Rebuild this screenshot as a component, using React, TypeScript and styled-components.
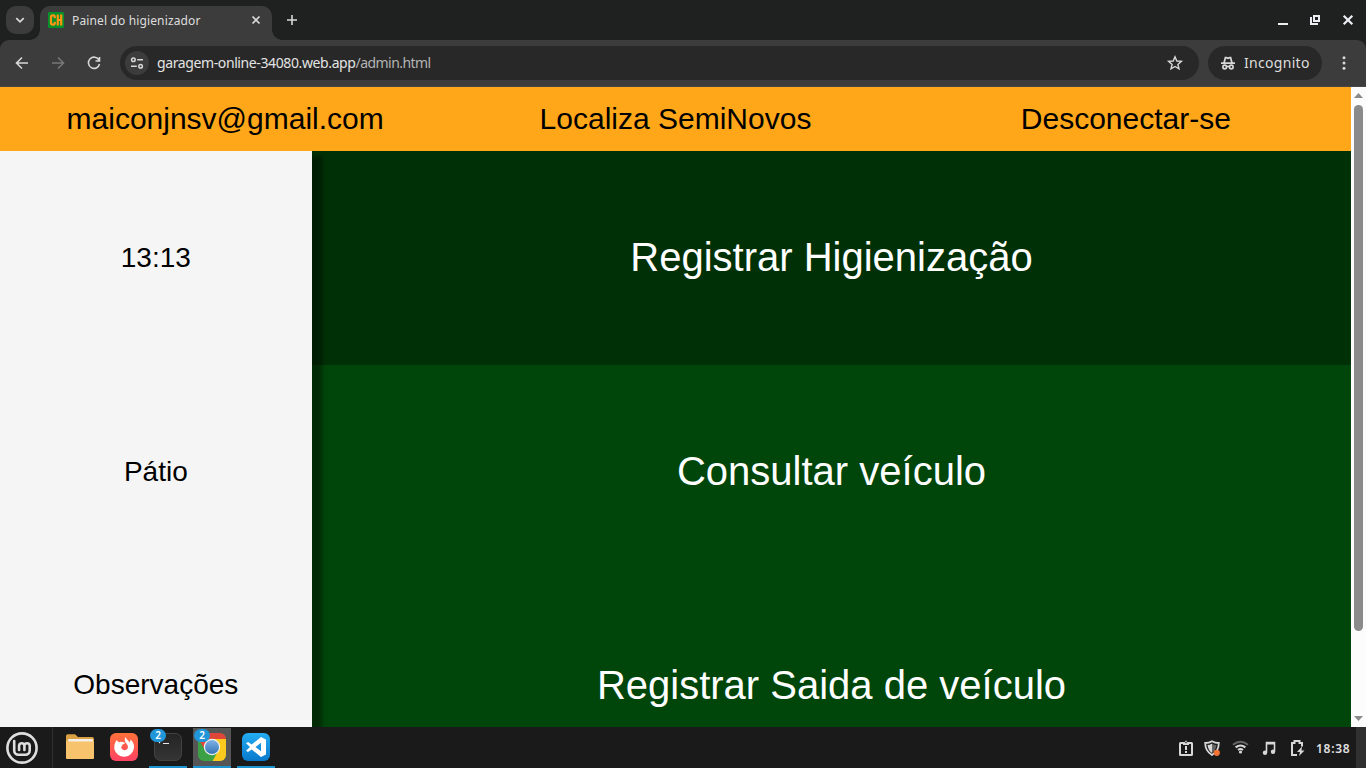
import React from 'react';
import styled, { createGlobalStyle } from 'styled-components';

const GlobalStyle = createGlobalStyle`
  * { box-sizing: border-box; }
  body { margin: 0; overflow: hidden; background: #1a1a1a; }
`;
const uiFont = `'Noto Sans', 'Open Sans', sans-serif`;

const Screen = styled.div`
  width: 1366px; height: 768px; display: flex; flex-direction: column; overflow: hidden;
  font-family: 'Liberation Sans', Arial, sans-serif;
`;
const TabStrip = styled.div`
  height: 40px; background: #1f2120; display: flex; align-items: center; padding: 0 10px 0 6px; flex: none;
`;
const TabSearch = styled.div`
  width: 28px; height: 28px; border-radius: 10px; background: #3c3c3c; display: grid; place-items: center; margin-right: 6px;
`;
const Tab = styled.div`
  position: relative; align-self: flex-end; width: 232px; height: 34px; background: #3c3c3c; border-radius: 10px 10px 0 0;
  display: flex; align-items: center; padding: 0 9px 6px 8px;
  &::before, &::after { content: ''; position: absolute; bottom: 0; width: 10px; height: 10px; }
  &::before { left: -10px; background: radial-gradient(circle at 0 0, transparent 9.5px, #3c3c3c 10px); }
  &::after { right: -10px; background: radial-gradient(circle at 100% 0, transparent 9.5px, #3c3c3c 10px); }
`;
const TabTitle = styled.div`
  flex: 1; margin-left: 8px; color: #dedede; font: 12px/16px ${uiFont}; white-space: nowrap; letter-spacing: 0.14px; padding-top: 1px;
`;
const NewTab = styled.div`display: grid; place-items: center; width: 20px; height: 20px; margin-left: 10px;`;
const WindowButtons = styled.div`margin-left: auto; display: flex; gap: 16px;`;
const Toolbar = styled.div`
  height: 47px; flex: none; display: flex; align-items: center; padding: 0 12px 1px 12px;
  background: #3c3c3c; border-radius: 9px 9px 0 0; border-bottom: 1px solid #474747;
`;
const ToolbarWrap = styled.div`background: #1f2120; flex: none;`;
const NavButtons = styled.div`display: flex; gap: 16px; margin-right: 16px;`;
const AddressBar = styled.div`
  width: 1079px; height: 34px; border-radius: 17px; background: #282828; display: flex; align-items: center; padding: 0 14px 0 5px;
`;
const SiteInfo = styled.div`width: 24px; height: 24px; border-radius: 50%; background: #3c3c3c; display: grid; place-items: center;`;
const Url = styled.div`
  flex: 1; margin-left: 8px; color: #e3e3e3; font: 14px/20px ${uiFont}; letter-spacing: -0.39px; white-space: nowrap;
  span { color: #b4b4b4; letter-spacing: -0.55px; }
`;
const Incognito = styled.div`
  width: 114px; height: 34px; margin-left: 9px; border-radius: 17px; background: #282828; color: #dedede;
  display: flex; align-items: center; gap: 8px; padding-left: 12px; font: 14px/20px ${uiFont}; letter-spacing: 0.3px; white-space: nowrap;
`;
const MenuButton = styled.div`margin-left: 14px; display: flex;`;

const Viewport = styled.div`height: 640px; flex: none; display: flex; overflow: hidden;`;
const Page = styled.div`width: 1351px; height: 640px; overflow: hidden;`;
const Header = styled.header`
  height: 64px; background: #ffa719; display: grid; grid-template-columns: repeat(3, 1fr); place-items: center;
  font-size: 30px; line-height: 34px; color: #000;
`;
const Content = styled.div`display: flex; height: 641px; position: relative; overflow: hidden;`;
const Sidebar = styled.aside`
  width: 312px; background: #f5f5f5; display: grid; grid-template-rows: 213px 215px 212px;
  position: relative; z-index: 1; box-shadow: 10px 5px 4px rgba(0, 0, 0, 0.38);
`;
const SideItem = styled.div`display: grid; place-items: center; font-size: 28px; color: #000; padding-right: 0.4px;`;
const Actions = styled.main`flex: 1; display: grid; grid-template-rows: repeat(3, 1fr);`;
const Action = styled.div<{ $active?: boolean }>`
  display: grid; place-items: center; font-size: 40px; color: #fff;
  background: ${p => (p.$active ? '#003006' : '#00450a')};
`;
const Scrollbar = styled.div`
  width: 15px; background: #fcfcfc; display: flex; flex-direction: column; align-items: center; padding: 6px 0;
`;
const Thumb = styled.div`width: 9px; height: 526px; border-radius: 5px; background: #8b8b8b; margin: 7px 0 auto;`;

const Taskbar = styled.footer`height: 41px; flex: none; background: #1a1a1a; display: flex; align-items: stretch;`;
const MintButton = styled.div`width: 53px; border-right: 1px solid #303030; padding: 4px 0 0 5px; margin-right: 8px;`;
const AppButton = styled.div<{ $running?: boolean; $focused?: boolean }>`
  position: relative; width: 38px; margin: 1px 6px 0 0; display: flex; justify-content: center; padding-top: 4px;
  background: ${p => (p.$focused ? '#555' : 'transparent')};
  border-bottom: ${p => (p.$running ? '2px solid #1d94d2' : '0')};
`;
const Badge = styled.div`
  position: absolute; left: 1px; top: 1px; width: 16px; height: 13px; border-radius: 7px; background: #2196d8;
  color: #fff; font: 600 10px/13px ${uiFont}; text-align: center;
`;
const Tray = styled.div`margin-left: auto; display: flex; align-items: center;`;
const TrayIcons = styled.div`
  display: flex; align-items: center; gap: 12px; margin-right: 11px;
  & > :first-child { margin-right: -2px; }
`;
const Clock = styled.div`
  font: 600 12px/16px ${uiFont}; color: #e0e0e0; width: 36px; letter-spacing: 0.7px; white-space: nowrap; margin-right: 4px; padding-top: 2px;
`;
const ShowDesktop = styled.div`width: 10px; background: #303030; align-self: stretch;`;

type IconProps = { size?: number; color?: string; width?: number; children: React.ReactNode };
const IconSvg = styled.svg`display: block; flex: none;`;
const Icon = ({ size = 20, color = '#d8d8d8', width = 1.6, children }: IconProps) => (
  <IconSvg width={size} height={size} viewBox={`0 0 ${size} ${size}`} fill="none" stroke={color} strokeWidth={width}>{children}</IconSvg>
);

const Favicon = () => (
  <svg width="16" height="16" viewBox="0 0 16 16">
    <rect width="16" height="16" rx="1" fill="#078f2b" />
    <g fill="none" stroke="#ff9413" strokeWidth="2.2">
      <path d="M6.8 6.3V4.8A1.4 1.4 0 0 0 5.4 3.4H4.6A1.6 1.6 0 0 0 3 5v6a1.6 1.6 0 0 0 1.6 1.6h.8a1.4 1.4 0 0 0 1.4-1.4V9.7" />
      <path d="M9.8 2.5v11M13.2 2.5v11M9.8 8h3.4" />
    </g>
  </svg>
);

const Mint = () => (
  <svg width="34" height="34" viewBox="0 0 34 34" fill="none" stroke="#dedede" strokeLinecap="round">
    <circle cx="17" cy="17" r="14.6" strokeWidth="2.6" />
    <path strokeWidth="2.6" d="M9.2 10v9.5a4.3 4.3 0 0 0 4.3 4.3h6.9a4.3 4.3 0 0 0 4.3-4.3v-5a2.7 2.7 0 0 0-5.3 0v4.5M19.4 14.5a2.7 2.7 0 0 0-5.3 0v4.5" />
  </svg>
);

const Folder = () => (
  <svg width="30" height="30" viewBox="0 0 30 30">
    <path fill="#d9a044" d="M1 4q0-1.7 1.7-1.7H10L13 5h14q2 0 2 2v5H1z" />
    <rect x="3" y="7" width="25" height="5" rx="1" fill="#f3eee8" />
    <path fill="#f8c36d" d="M1 8.5h2l1.5 1H29V26q0 1-1 1H2q-1 0-1-1z" />
  </svg>
);

const Firefox = () => (
  <svg width="30" height="30" viewBox="0 0 30 30">
    <defs><linearGradient id="fox" x1="0" y1="0" x2="0" y2="1"><stop stopColor="#ff7139" /><stop offset="1" stopColor="#ff4264" /></linearGradient></defs>
    <rect x="1" y="1" width="28" height="28" rx="6" fill="url(#fox)" />
    <path fill="#fff" d="M7.8 8q.6 1.6 2.2 2.2 2-.9 3.8-.2 1.2.8 2.8.7-1.2 1.4-3 1.7-.6 1.6-1.5 2.6.1 2.5 2.9 3.3 3.5.2 4-3.3-.1-2.2-2-4-2-2.2-.6-6 .8 2 2.7 3.4 1.4 1.2 1.8 2.2l.6-3q4 3.5 3.5 8.2A10 10 0 0 1 5.3 17Q4.8 11.5 7.8 8z" />
  </svg>
);

const Terminal = () => (
  <svg width="30" height="30" viewBox="0 0 30 30">
    <defs><linearGradient id="term" x1="0" y1="0" x2="0" y2="1"><stop stopColor="#242424" /><stop offset="1" stopColor="#353535" /></linearGradient></defs>
    <rect x="1.5" y="1.5" width="27" height="27" rx="6" fill="url(#term)" stroke="#424242" />
    <path d="M6 10l1 1M10 11.5h6" stroke="#e8e8e8" strokeWidth="1.2" />
  </svg>
);

const Chrome = () => (
  <svg width="30" height="30" viewBox="0 0 30 30">
    <defs>
      <clipPath id="chromeTile"><rect x="1" y="1" width="28" height="28" rx="6" /></clipPath>
      <linearGradient id="chromeBlue" x1="0" y1="0" x2="0" y2="1"><stop stopColor="#80b2e6" /><stop offset="1" stopColor="#3674b5" /></linearGradient>
    </defs>
    <g clipPath="url(#chromeTile)">
      <rect width="30" height="30" fill="#3ba144" />
      <path fill="#fac91d" d="M15 7h15v23H15l6-11z" />
      <path fill="#df4539" d="M1 0h28v7H15L8 18 2 8z" />
    </g>
    <circle cx="15" cy="15" r="8.2" fill="#f3f3ed" />
    <circle cx="15" cy="15" r="7" fill="url(#chromeBlue)" />
  </svg>
);

const Code = () => (
  <svg width="30" height="30" viewBox="0 0 30 30">
    <defs><linearGradient id="code" x1="0" y1="0" x2="0" y2="1"><stop stopColor="#24acf2" /><stop offset="1" stopColor="#0879cc" /></linearGradient></defs>
    <rect x="1" y="1" width="28" height="28" rx="6" fill="url(#code)" />
    <path fill="#fff" fillRule="evenodd" d="M20 5l5 2.5v15L20 25l-9.3-7.6L7 20l-2-1.3L9 15l-4-3.7L7 10l3.7 2.6zM20 10.8L14.5 15l5.5 4.2z" />
  </svg>
);

export default function App() {
  return (
    <Screen>
      <GlobalStyle />
      <TabStrip>
        <TabSearch><Icon size={14} width={1.8}><path d="M3.3 5.2L7 8.8l3.7-3.6" /></Icon></TabSearch>
        <Tab>
          <Favicon />
          <TabTitle>Painel do higienizador</TabTitle>
          <Icon size={14} width={1.7}><path d="M3.5 3.5l7 7m0-7l-7 7" /></Icon>
        </Tab>
        <NewTab><Icon size={14} width={1.6}><path d="M7 2v10M2 7h10" /></Icon></NewTab>
        <WindowButtons>
          <Icon size={16} color="#eeeef2" width={2}><path d="M2 12h10" /></Icon>
          <Icon size={16} color="#eeeef2" width={2}><path d="M6 4h5v5H6zM3 5v7h7" /></Icon>
          <Icon size={16} color="#eeeef2" width={2.2}><path d="M3.7 3.7l8.6 8.6m0-8.6l-8.6 8.6" /></Icon>
        </WindowButtons>
      </TabStrip>
      <ToolbarWrap>
        <Toolbar>
          <NavButtons>
            <Icon><path d="M16 10H4.7M10 4.5L4.5 10l5.5 5.5" /></Icon>
            <Icon color="#777"><path d="M4 10h11.3M10 4.5l5.5 5.5-5.5 5.5" /></Icon>
            <Icon><path d="M15 7.2A5.6 5.6 0 1 0 15.5 11M15.5 4v4h-4" /></Icon>
          </NavButtons>
          <AddressBar>
            <SiteInfo><Icon size={16} width={1.5}><circle cx="4.4" cy="4.8" r="1.8" /><path d="M8.2 4.8H14M2 11.2h5.8" /><circle cx="11.6" cy="11.2" r="1.8" /></Icon></SiteInfo>
            <Url>garagem-online-34080.web.app<span>/admin.html</span></Url>
            <Icon width={1.4}><path d="M10 3.8l1.8 4.2 4.6.4-3.5 3 1.1 4.5-4-2.4-4 2.4 1.1-4.5-3.5-3 4.6-.4z" /></Icon>
          </AddressBar>
          <Incognito>
            <Icon size={16} width={1.7}><path d="M1 8.1h14M4 8l1.4-5.3h1l1.6.6 1.6-.6h1L12 8" /><circle cx="4.7" cy="12" r="1.8" /><circle cx="11.3" cy="12" r="1.8" /><path d="M6.4 11.7q1.6-.8 3.2 0" /></Icon>
            Incognito
          </Incognito>
          <MenuButton><Icon size={16}><g fill="#d8d8d8" stroke="none"><circle cx="8" cy="2.8" r="1.5" /><circle cx="8" cy="8" r="1.5" /><circle cx="8" cy="13.2" r="1.5" /></g></Icon></MenuButton>
        </Toolbar>
      </ToolbarWrap>
      <Viewport>
        <Page>
          <Header><span>maiconjnsv@gmail.com</span><span>Localiza SemiNovos</span><span>Desconectar-se</span></Header>
          <Content>
            <Sidebar><SideItem>13:13</SideItem><SideItem>Pátio</SideItem><SideItem>Observações</SideItem></Sidebar>
            <Actions>
              <Action $active>Registrar Higienização</Action>
              <Action>Consultar veículo</Action>
              <Action>Registrar Saida de veículo</Action>
            </Actions>
          </Content>
        </Page>
        <Scrollbar>
          <svg width="9" height="5" viewBox="0 0 9 5" fill="#8b8b8b"><path d="M0 5L4.5 0 9 5z" /></svg>
          <Thumb />
          <svg width="9" height="5" viewBox="0 0 9 5" fill="#8b8b8b"><path d="M0 0l4.5 5L9 0z" /></svg>
        </Scrollbar>
      </Viewport>
      <Taskbar>
        <MintButton><Mint /></MintButton>
        <AppButton><Folder /></AppButton>
        <AppButton><Firefox /></AppButton>
        <AppButton $running><Terminal /><Badge>2</Badge></AppButton>
        <AppButton $running $focused><Chrome /><Badge>2</Badge></AppButton>
        <AppButton $running><Code /></AppButton>
        <Tray>
          <TrayIcons>
            <Icon size={16} width={2}><rect x="2" y="3" width="12" height="12" rx=".5" /><path d="M5 5V2.5h1.5L8 .3l1.5 2.2H11V5z" fill="#d8d8d8" stroke="none" /><circle cx="8" cy="2.5" r=".8" fill="#1a1a1a" stroke="none" /><path d="M8 6v4M8 11v2" /></Icon>
            <Icon size={16} width={1.8}><path d="M8 1.2Q5 3 1.2 3q0 8 6.8 12 6.8-4 6.8-12Q11 3 8 1.2z" /><path fill="#d8d8d8" stroke="none" d="M8 3.5Q6 5 3.5 5q.5 5 4.5 8z" /><path fill="#666" stroke="none" d="M8 3.5Q10 5 12.5 5q-.5 5-4.5 8z" /><circle cx="12.8" cy="12.8" r="3.1" fill="#f57435" stroke="none" /></Icon>
            <Icon size={17} width={2}><path stroke="#666" d="M1 5.7q7.5-6 15 0" /><path d="M3.6 8.4q4.9-3.8 9.8 0M6 11q2.5-1.8 5 0" /><circle cx="8.5" cy="13" r="1.6" fill="#d8d8d8" stroke="none" /></Icon>
            <Icon size={16}><path d="M5.5 12.5V2.5h8v9" /><path d="M5.5 3.5h8" strokeWidth="2" /><g fill="#d8d8d8" stroke="none"><circle cx="4" cy="12.8" r="2.2" /><circle cx="12" cy="11.8" r="2.2" /></g></Icon>
            <Icon size={16} width={2}><path d="M8 15H3V3h2.5V1h5v2H13v3.5" /><path d="M13 6.5L8 12h3l-1 4 5.5-5.5h-3z" fill="#d8d8d8" stroke="none" /></Icon>
          </TrayIcons>
          <Clock>18:38</Clock>
          <ShowDesktop />
        </Tray>
      </Taskbar>
    </Screen>
  );
}
